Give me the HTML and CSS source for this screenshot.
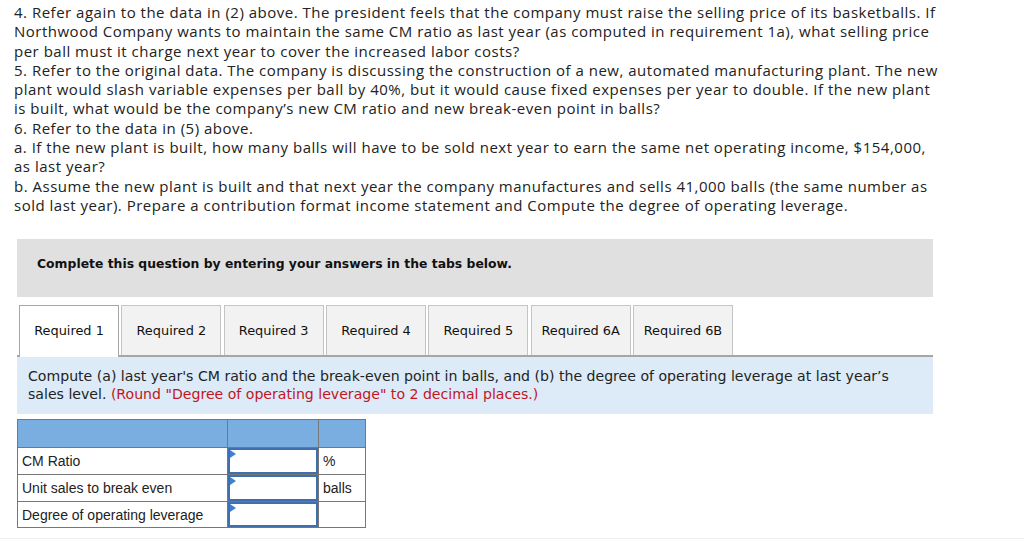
FILE: index.html
```html
<!DOCTYPE html>
<html>
<head>
<meta charset="utf-8">
<link rel="stylesheet" href="styles.css">
</head>
<body>
<div class="question">
<p>4. Refer again to the data in (2) above. The president feels that the company must raise the selling price of its basketballs. If Northwood Company wants to maintain the same CM ratio as last year (as computed in requirement 1a), what selling price per ball must it charge next year to cover the increased labor costs?</p>
<p>5. Refer to the original data. The company is discussing the construction of a new, automated manufacturing plant. The new plant would slash variable expenses per ball by 40%, but it would cause fixed expenses per year to double. If the new plant is built, what would be the company’s new CM ratio and new break-even point in balls?</p>
<p>6. Refer to the data in (5) above.</p>
<p>a. If the new plant is built, how many balls will have to be sold next year to earn the same net operating income, $154,000, as last year?</p>
<p>b. Assume the new plant is built and that next year the company manufactures and sells 41,000 balls (the same number as sold last year). Prepare a contribution format income statement and Compute the degree of operating leverage.</p>
</div>

<div class="panel">
  <div class="banner">Complete this question by entering your answers in the tabs below.</div>
  <div class="tabs">
    <div class="tab active">Required 1</div>
    <div class="tab">Required 2</div>
    <div class="tab">Required 3</div>
    <div class="tab">Required 4</div>
    <div class="tab">Required 5</div>
    <div class="tab">Required 6A</div>
    <div class="tab">Required 6B</div>
  </div>
  <div class="instructions"><span class="line">Compute (a) last year's CM ratio and the break-even point in balls, and (b) the degree of operating leverage at last year’s</span> <span class="line">sales level. <span class="red">(Round "Degree of operating leverage" to 2 decimal places.)</span></span></div>
  <table class="answers">
    <tr class="head"><td class="c1"></td><td class="c2"></td><td class="c3"></td></tr>
    <tr><td class="c1">CM Ratio</td><td class="c2"><div class="inp"></div></td><td class="c3">%</td></tr>
    <tr><td class="c1">Unit sales to break even</td><td class="c2"><div class="inp"></div></td><td class="c3">balls</td></tr>
    <tr><td class="c1">Degree of operating leverage</td><td class="c2"><div class="inp"></div></td><td class="c3"></td></tr>
  </table>
</div>
<div class="rule"></div>
</body>
</html>
```

FILE: styles.css
```css
html, body { margin: 0; padding: 0; background: #fff; }
body { width: 1024px; height: 542px; overflow: hidden; }

.question {
  padding: 3px 0 0 14px;
  width: 932px;
  font-family: "Open Sans", "Lato", sans-serif;
  font-size: 15px;
  letter-spacing: 0.5px;
  line-height: 19.3px;
  color: #222;
}
.question p { margin: 0; }

.panel { margin: 24px 0 0 17px; width: 916px; }

.banner {
  background: #e0e0e0;
  height: 58px;
  box-sizing: border-box;
  padding: 17px 0 0 20px;
  font-family: "DejaVu Sans", Verdana, sans-serif;
  font-weight: bold;
  font-size: 12.4px;
  color: #111;
}

.tabs {
  display: flex;
  gap: 2.33px;
  margin-top: 8px;
  padding-left: 2px;
  border-bottom: 2px solid #a6a6a6;
}
.tab {
  width: 100px;
  height: 50px;
  box-sizing: border-box;
  border: 1px solid #c4c4c4;
  border-bottom: none;
  background: #f2f2f2;
  font-family: "DejaVu Sans", Verdana, sans-serif;
  font-size: 12.9px;
  color: #111;
  display: flex;
  align-items: center;
  justify-content: center;
}
.tab.active {
  background: #fff;
  border-color: #a6a6a6;
  height: 52px;
  margin-bottom: -2px;
  padding-bottom: 2px;
}

.instructions {
  background: #dcebf7;
  height: 57px;
  box-sizing: border-box;
  padding: 11px 20px 0 11px;
  font-family: "DejaVu Sans", Verdana, sans-serif;
  font-size: 14.1px;
  line-height: 17.5px;
  color: #222;
}
.instructions .line { display: block; white-space: nowrap; }
.red { color: #c2151d; }

.answers {
  margin-top: 5px;
  border-collapse: collapse;
  font-family: "Liberation Sans", Arial, sans-serif;
  font-size: 14px;
  color: #222;
}
.answers td {
  border: 1px solid #777;
  height: 27px;
  padding: 0 4px;
  box-sizing: border-box;
}
.answers .head td { background: #7aaee1; height: 28px; }
.answers .c1 { width: 210px; }
.answers .c2 { width: 91px; padding: 0; }
.answers .c3 { width: 47px; }
.answers tr:last-child td { height: 25px; }

.inp {
  position: relative;
  height: 100%;
  min-height: 25px;
  border: 2px solid #3f6fae;
  box-sizing: border-box;
  background: #fff;
}
.inp::before {
  content: "";
  position: absolute;
  left: 0;
  top: 0;
  border-left: 6px solid #3f7fd0;
  border-top: 4px solid transparent;
  border-bottom: 4px solid transparent;
}

.rule {
  margin-top: 10px;
  height: 1px;
  background: #eee;
}
```
